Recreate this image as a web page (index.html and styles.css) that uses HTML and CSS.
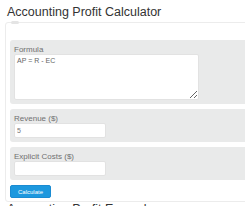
FILE: index.html
```html
<!DOCTYPE html>
<html>
  <head>
    <meta http-equiv="Content-Type" content="text/html;charset=utf-8" />
    <title>Accounting Profit Calculator</title>
    <link rel="stylesheet" href="styles.css">
  </head>

  <body>
    <h1 class="page-title">Accounting Profit Calculator</h1>

    <div class="calc-box">
      <span class="calc-tab"></span>

      <div class="field-group">
        <label for="formula">Formula</label>
        <textarea id="formula" class="formula-box">AP = R - EC</textarea>
      </div>

      <div class="field-group">
        <label for="revenue">Revenue ($)</label>
        <input type="text" id="revenue" class="field-input" value="5" />
      </div>

      <div class="field-group">
        <label for="costs">Explicit Costs ($)</label>
        <input type="text" id="costs" class="field-input" value="" />
      </div>

      <button class="calc-button" id="calculate">Calculate</button>
    </div>

    <h2 class="section-title">Accounting Profit Example</h2>
  </body>
</html>
```

FILE: styles.css
```css
body {
  background-color: #ffffff;
  color: #333333;
  font-family: "Liberation Sans", Arial, sans-serif;
  margin: 0;
  width: 245px;
  height: 206px;
  overflow: hidden;
}

.page-title {
  font-size: 12.5px;
  font-weight: normal;
  line-height: 14px;
  margin: 5px 0 3px 7px;
  color: #333333;
}

.calc-box {
  position: relative;
  width: 300px;
  margin-left: 5px;
  padding: 17px 4px 3px 4px;
  border: 1px solid #ececec;
  border-radius: 3px;
}

.calc-tab {
  position: absolute;
  top: -2px;
  left: 5px;
  width: 8px;
  height: 3px;
  border-radius: 2px;
  background-color: #e4e4e4;
}

.field-group {
  background-color: #e9eaea;
  border-radius: 3px;
  padding: 5px 4px 4px 4px;
  margin-bottom: 5px;
}

.field-group label {
  display: block;
  font-size: 8px;
  line-height: 9px;
  color: #707070;
}

.formula-box {
  display: block;
  box-sizing: border-box;
  width: 185px;
  height: 46px;
  margin: 0;
  padding: 2px 2px;
  border: 1px solid #e2e2e2;
  border-radius: 2px;
  font-family: "Liberation Sans", Arial, sans-serif;
  font-size: 7px;
  color: #666666;
}

.field-input {
  display: block;
  box-sizing: border-box;
  width: 92px;
  height: 15px;
  margin: 0;
  padding: 0 2px;
  border: 1px solid #e2e2e2;
  border-radius: 2px;
  font-family: "Liberation Sans", Arial, sans-serif;
  font-size: 7px;
  color: #777777;
}

.calc-button {
  display: block;
  width: 41px;
  height: 13px;
  margin-top: 0;
  padding: 0;
  border: 1px solid #1a8bd2;
  border-radius: 2px;
  background-color: #1d98de;
  color: #ffffff;
  font-family: "Liberation Sans", Arial, sans-serif;
  font-size: 6px;
}

.section-title {
  font-size: 12.5px;
  font-weight: normal;
  line-height: 13px;
  margin: 1px 0 0 7px;
  color: #333333;
}
```
